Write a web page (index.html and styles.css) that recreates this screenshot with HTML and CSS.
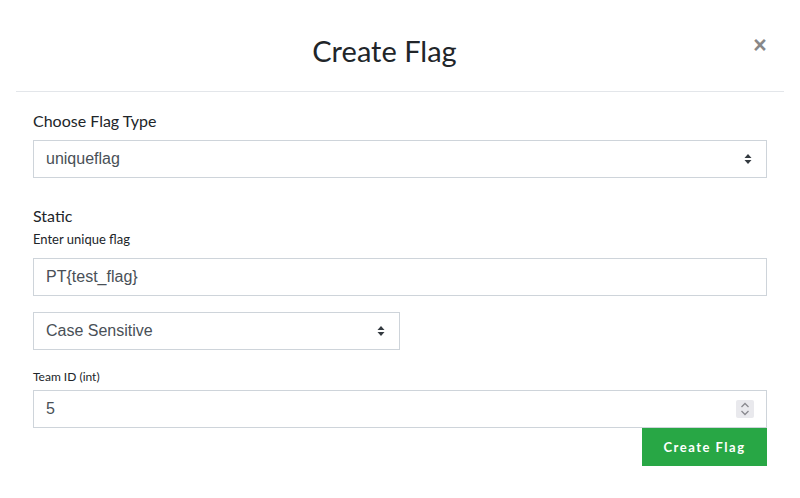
FILE: index.html
```html
<!DOCTYPE html>
<html>
<head>
<meta charset="utf-8">
<link rel="stylesheet" href="styles.css">
</head>
<body>
<div class="modal">
  <div class="modal-header">
    <h1 class="title">Create Flag</h1>
    <span class="close">&times;</span>
  </div>
  <div class="modal-body">
    <label class="label">Choose Flag Type</label>
    <div class="select full">
      <span>uniqueflag</span>
      <svg class="caret" width="8" height="12" viewBox="0 0 8 12"><path d="M4 1 L7.5 5 H0.5 Z M4 11 L7.5 7 H0.5 Z" fill="#343a40"/></svg>
    </div>
    <div class="section">Static</div>
    <label class="small-label">Enter unique flag</label>
    <div class="input full">PT{test_flag}</div>
    <div class="select half">
      <span>Case Sensitive</span>
      <svg class="caret" width="8" height="12" viewBox="0 0 8 12"><path d="M4 1 L7.5 5 H0.5 Z M4 11 L7.5 7 H0.5 Z" fill="#343a40"/></svg>
    </div>
    <label class="small-label team">Team ID (int)</label>
    <div class="input full number">5
      <span class="spinner">
        <svg width="18" height="18" viewBox="0 0 18 18"><path d="M5.5 7 L9 3.5 L12.5 7 M5.5 11 L9 14.5 L12.5 11" fill="none" stroke="#8a8a8f" stroke-width="1.3"/></svg>
      </span>
    </div>
    <div class="actions">
      <button class="btn">Create Flag</button>
    </div>
  </div>
</div>
</body>
</html>
```
FILE: styles.css
```css
html, body {
  margin: 0;
  padding: 0;
  background: #fff;
}
body {
  font-family: Lato, "Open Sans", sans-serif;
  color: #212529;
}
.modal {
  width: 800px;
  height: 498px;
  padding: 0 16px;
  box-sizing: border-box;
}
.modal-header {
  height: 92px;
  border-bottom: 1px solid #e3e6ea;
  display: flex;
  align-items: center;
  box-sizing: border-box;
}
.title {
  flex: 1;
  margin: 0;
  padding-left: 8px;
  text-align: center;
  font-size: 29px;
  font-weight: 400;
  color: #212529;
  position: relative;
  top: 5px;
}
.close {
  width: 30px;
  text-align: center;
  font-family: "Liberation Sans", Arial, sans-serif;
  font-size: 23px;
  font-weight: 700;
  color: #888;
  margin-right: 9px;
  position: relative;
  top: 0px;
}
.modal-body {
  padding: 0 17px;
}
.label {
  display: block;
  font-size: 16px;
  height: 19px;
  line-height: 19px;
  margin-top: 19px;
  margin-bottom: 10px;
}
.select, .input {
  height: 38px;
  border: 1px solid #ced4da;
  box-sizing: border-box;
  display: flex;
  align-items: center;
  padding: 0 12px;
  font-family: "Liberation Sans", Arial, sans-serif;
  font-size: 16px;
  color: #495057;
}
.full {
  width: 734px;
}
.half {
  width: 367px;
  margin-top: 16px;
}
.select span {
  flex: 1;
}
.caret {
  margin-right: 2px;
}
.section {
  font-size: 16px;
  height: 19px;
  line-height: 19px;
  margin-top: 28px;
}
.small-label {
  display: block;
  font-size: 13px;
  height: 16px;
  line-height: 16px;
  margin-top: 6px;
  margin-bottom: 11px;
}
.small-label.team {
  font-size: 12px;
  height: 15px;
  line-height: 15px;
  margin-top: 19px;
  margin-bottom: 6px;
}
.number {
  position: relative;
}
.spinner {
  position: absolute;
  right: 12px;
  top: 9px;
  width: 18px;
  height: 18px;
  background: #e9e9ed;
  border-radius: 2px;
  display: flex;
}
.actions {
  display: flex;
  justify-content: flex-end;
  width: 734px;
}
.btn {
  width: 125px;
  height: 38px;
  border: none;
  background: #28a745;
  color: #fff;
  font-family: Lato, sans-serif;
  font-weight: 700;
  font-size: 13px;
  letter-spacing: 1.5px;
  padding: 0;
}
```
